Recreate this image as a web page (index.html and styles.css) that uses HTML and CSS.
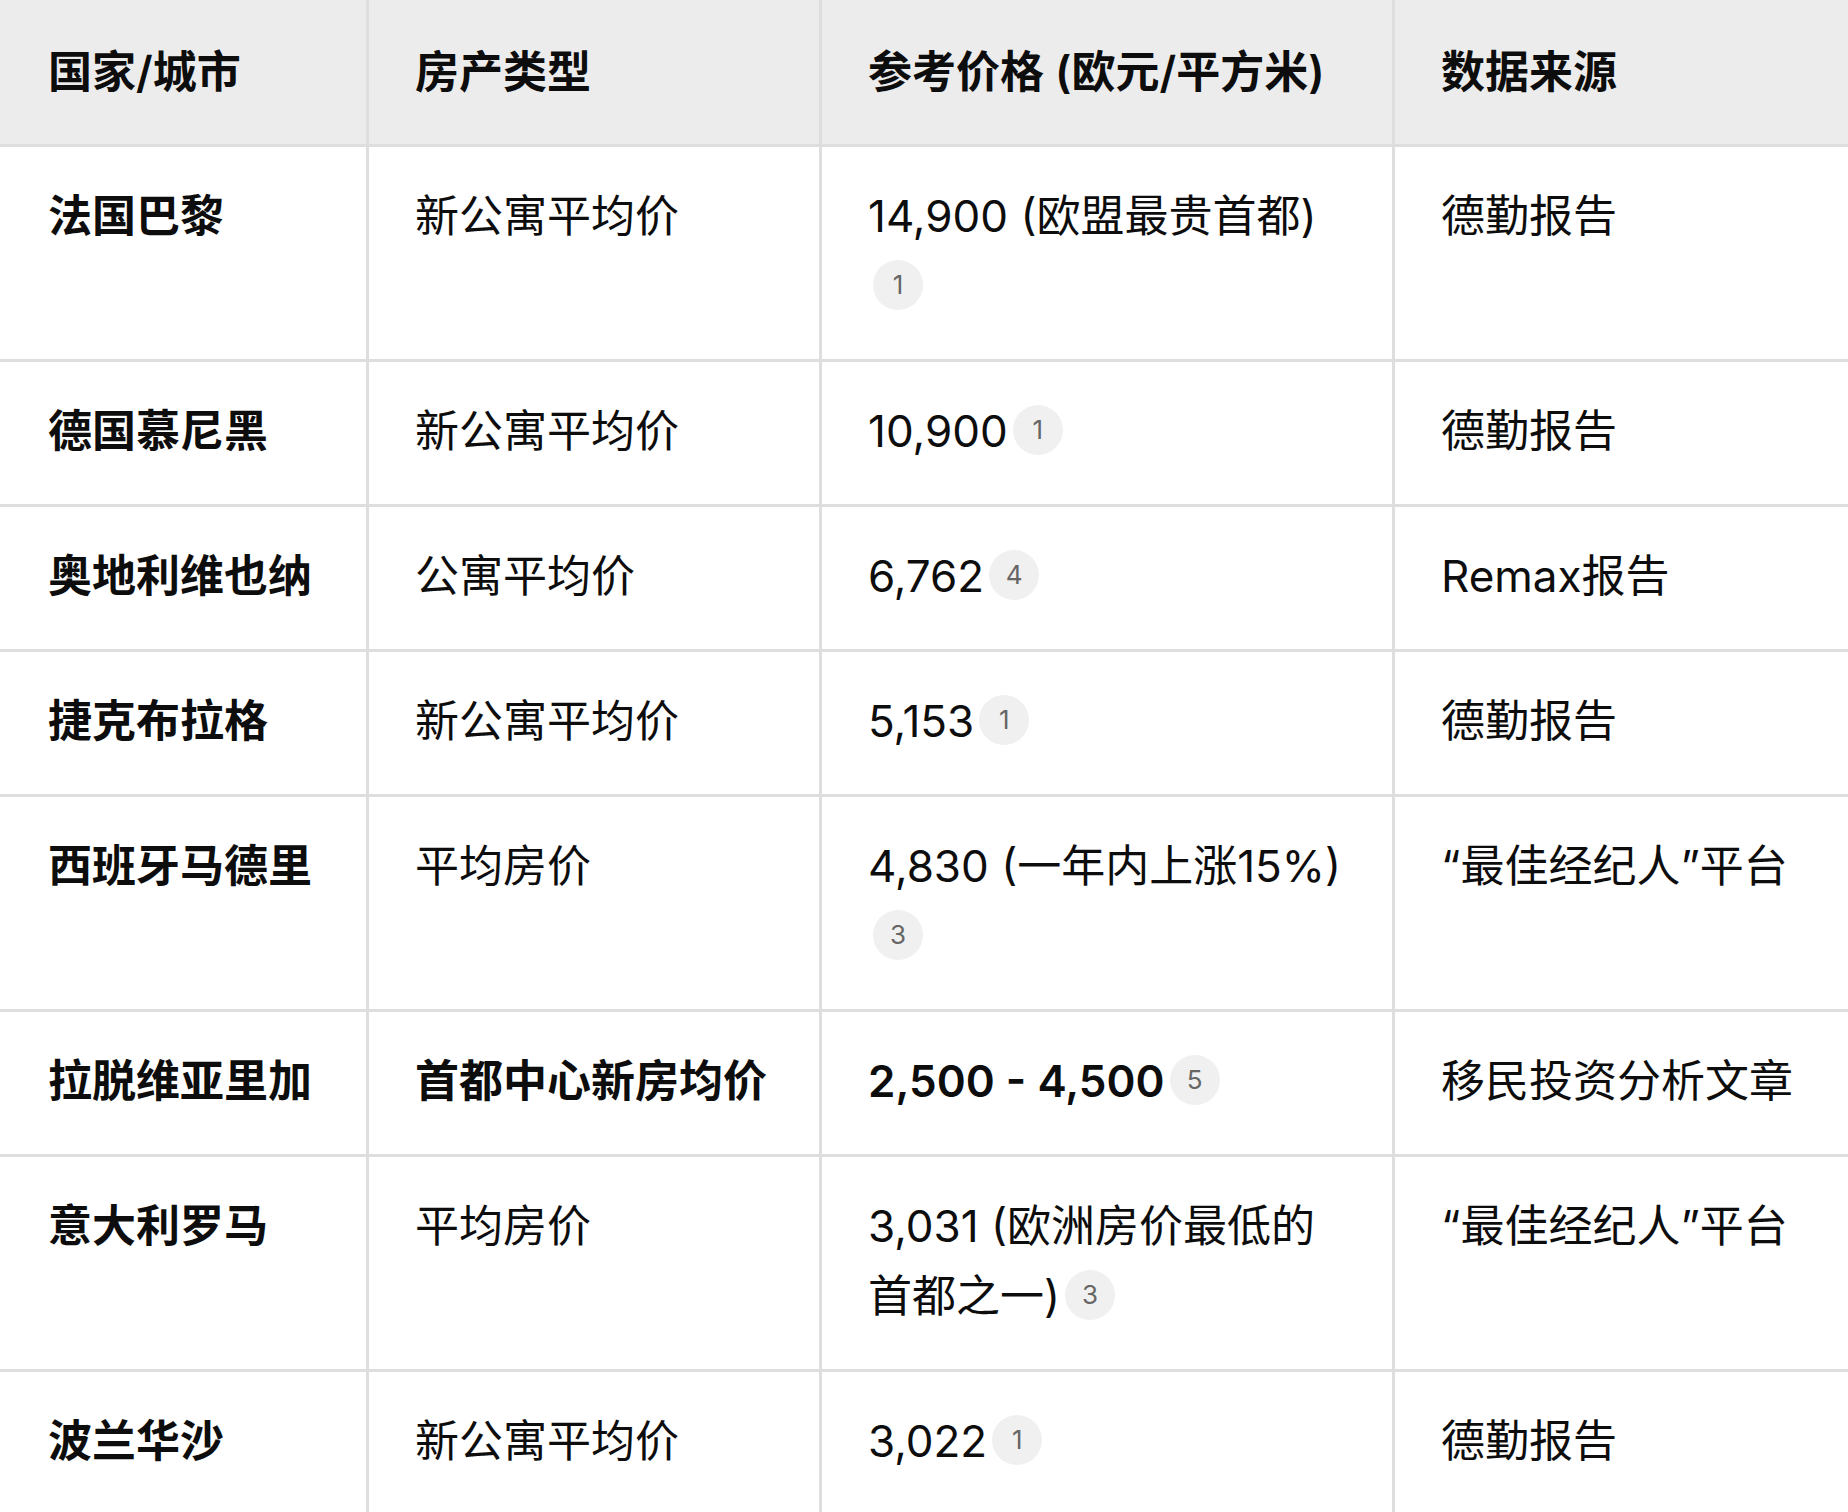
FILE: index.html
```html
<!DOCTYPE html>
<html lang="zh-CN">
<head>
<meta charset="utf-8">
<title>欧洲首都房价参考</title>
<link rel="stylesheet" href="styles.css">
</head>
<body>
<table class="price-table">
  <thead>
    <tr>
      <th class="col-city">国家/城市</th>
      <th class="col-type">房产类型</th>
      <th class="col-price">参考价格 (欧元/平方米)</th>
      <th class="col-src">数据来源</th>
    </tr>
  </thead>
  <tbody>
    <tr>
      <td class="name">法国巴黎</td>
      <td>新公寓平均价</td>
      <td>14,900 (欧盟最贵首都)<span class="cite">1</span></td>
      <td>德勤报告</td>
    </tr>
    <tr>
      <td class="name">德国慕尼黑</td>
      <td>新公寓平均价</td>
      <td>10,900<span class="cite">1</span></td>
      <td>德勤报告</td>
    </tr>
    <tr>
      <td class="name">奥地利维也纳</td>
      <td>公寓平均价</td>
      <td>6,762<span class="cite">4</span></td>
      <td>Remax报告</td>
    </tr>
    <tr>
      <td class="name">捷克布拉格</td>
      <td>新公寓平均价</td>
      <td>5,153<span class="cite">1</span></td>
      <td>德勤报告</td>
    </tr>
    <tr>
      <td class="name">西班牙马德里</td>
      <td>平均房价</td>
      <td>4,830 (一年内上涨15%)<span class="cite">3</span></td>
      <td>“最佳经纪人”平台</td>
    </tr>
    <tr>
      <td class="name">拉脱维亚里加</td>
      <td class="name">首都中心新房均价</td>
      <td class="name">2,500 - 4,500<span class="cite">5</span></td>
      <td>移民投资分析文章</td>
    </tr>
    <tr>
      <td class="name">意大利罗马</td>
      <td>平均房价</td>
      <td>3,031 (欧洲房价最低的首都之一)<span class="cite">3</span></td>
      <td>“最佳经纪人”平台</td>
    </tr>
    <tr>
      <td class="name">波兰华沙</td>
      <td>新公寓平均价</td>
      <td>3,022<span class="cite">1</span></td>
      <td>德勤报告</td>
    </tr>
  </tbody>
</table>
</body>
</html>
```

FILE: styles.css
```css
html, body {
  margin: 0;
  padding: 0;
  background: #ffffff;
}

body {
  font-family: Inter, "Noto Sans CJK SC", sans-serif;
  color: #0d0d0d;
}

.price-table {
  width: 1848px;
  table-layout: fixed;
  border-collapse: separate;
  border-spacing: 0;
  font-size: 44px;
  line-height: 70px;
}

.price-table th,
.price-table td {
  box-sizing: border-box;
  padding: 34px 47px 38px 46px;
  text-align: left;
  vertical-align: top;
  border-right: 3px solid #dedede;
  border-bottom: 3px solid #dedede;
  font-weight: 400;
}

.price-table th:last-child,
.price-table td:last-child {
  border-right: none;
}

.price-table th:first-child,
.price-table td:first-child {
  padding-left: 48px;
}

.price-table th {
  background: #ececec;
  font-weight: 600;
  padding-top: 37px;
  padding-bottom: 37px;
}

.col-city { width: 369px; }
.col-type { width: 453px; }
.col-price { width: 573px; }
.col-src { width: 453px; }

.price-table td.name {
  font-weight: 600;
}

.cite {
  display: inline-flex;
  align-items: center;
  justify-content: center;
  box-sizing: border-box;
  width: 50px;
  height: 50px;
  margin-left: 5px;
  margin-top: 9px;
  vertical-align: top;
  border-radius: 50%;
  background: #f0f0f0;
  color: #666666;
  font-size: 26px;
  font-weight: 400;
  line-height: 1;
}
```
